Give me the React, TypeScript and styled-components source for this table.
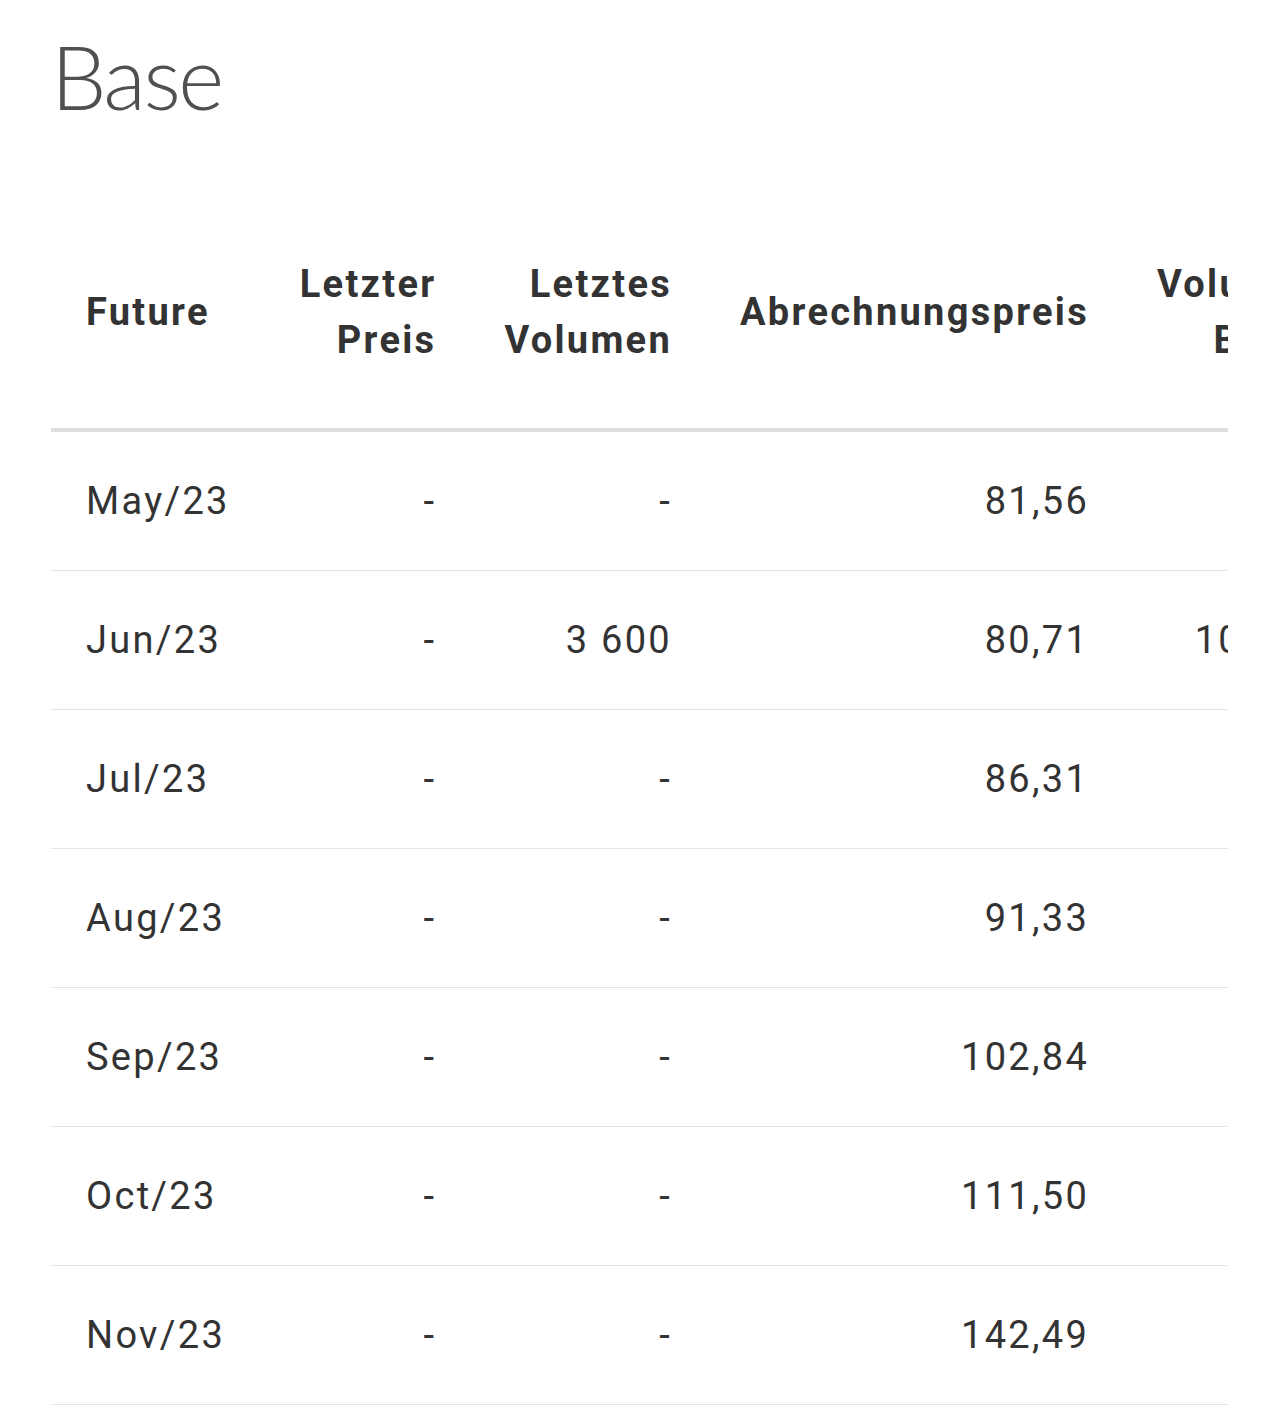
import React from "react";
import styled, { createGlobalStyle } from "styled-components";

const Global = createGlobalStyle`
  html, body { margin: 0; padding: 0; background: #ffffff; }
  body { font-family: Roboto, "Liberation Sans", sans-serif; }
`;

const Page = styled.main`
  padding: 32px 52px 0 51px;
  box-sizing: border-box;
  width: 1280px;
`;

const Title = styled.h1`
  margin: 0;
  font-family: Lato, "Open Sans", sans-serif;
  font-weight: 300;
  font-size: 88px;
  line-height: 88px;
  color: #505050;
  letter-spacing: -2.5px;
`;

const Scroller = styled.div`
  margin-top: 78px;
  overflow: hidden;
  width: 100%;
`;

const Table = styled.table`
  border-collapse: separate;
  border-spacing: 0;
  font-family: Roboto, "Liberation Sans", sans-serif;
  font-size: 38px;
  letter-spacing: 2.3px;
  color: #333333;
  white-space: nowrap;
`;

const Th = styled.th<{ $align?: "left" | "right" }>`
  text-align: ${(p) => p.$align ?? "right"};
  font-weight: 700;
  line-height: 56px;
  padding: 58px ${(p) => (p.$align === "left" ? "35px" : "33px")} 60px 35px;
  vertical-align: middle;
  border-bottom: 4px solid #dedede;
  color: #333333;
`;

const Td = styled.td<{ $align?: "left" | "right" }>`
  text-align: ${(p) => p.$align ?? "right"};
  font-weight: 400;
  line-height: 56px;
  padding: 41px ${(p) => (p.$align === "left" ? "35px" : "33px")} 41px 35px;
  border-bottom: 1px solid #e4e4e4;
  color: #333333;
`;

type Row = { future: string; lastPrice: string; lastVol: string; settle: string; volExch: string };

const rows: Row[] = [
  { future: "May/23", lastPrice: "-", lastVol: "-", settle: "81,56", volExch: "-" },
  { future: "Jun/23", lastPrice: "-", lastVol: "3 600", settle: "80,71", volExch: "10 800" },
  { future: "Jul/23", lastPrice: "-", lastVol: "-", settle: "86,31", volExch: "-" },
  { future: "Aug/23", lastPrice: "-", lastVol: "-", settle: "91,33", volExch: "-" },
  { future: "Sep/23", lastPrice: "-", lastVol: "-", settle: "102,84", volExch: "-" },
  { future: "Oct/23", lastPrice: "-", lastVol: "-", settle: "111,50", volExch: "-" },
  { future: "Nov/23", lastPrice: "-", lastVol: "-", settle: "142,49", volExch: "-" },
];

export default function App() {
  return (
    <>
      <Global />
      <Page>
        <Title>Base</Title>
        <Scroller>
          <Table>
            <thead>
              <tr>
                <Th $align="left">Future</Th>
                <Th>
                  Letzter
                  <br />
                  Preis
                </Th>
                <Th>
                  Letztes
                  <br />
                  Volumen
                </Th>
                <Th>Abrechnungspreis</Th>
                <Th>
                  Volumen
                  <br />
                  Börse
                </Th>
              </tr>
            </thead>
            <tbody>
              {rows.map((r) => (
                <tr key={r.future}>
                  <Td $align="left">{r.future}</Td>
                  <Td>{r.lastPrice}</Td>
                  <Td>{r.lastVol}</Td>
                  <Td>{r.settle}</Td>
                  <Td>{r.volExch}</Td>
                </tr>
              ))}
            </tbody>
          </Table>
        </Scroller>
      </Page>
    </>
  );
}
